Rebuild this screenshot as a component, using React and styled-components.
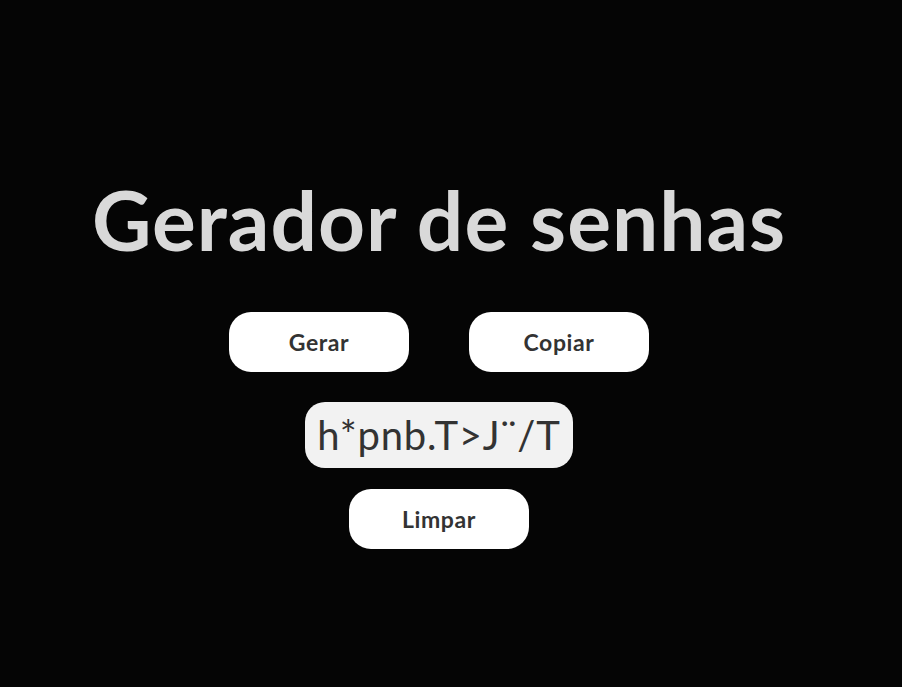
import * as React from "react";
import styled, { createGlobalStyle } from "styled-components";

const GlobalStyle = createGlobalStyle`
  html, body {
    margin: 0;
    background: #050505;
  }
  body {
    padding: 8px;
    font-family: "Lato", "Open Sans", sans-serif;
  }
`;

const Page = styled.main`
  width: 862px;
  display: flex;
  flex-direction: column;
  align-items: center;
`;

const Title = styled.h1`
  margin: 161px 0 0;
  font-size: 82px;
  font-weight: 700;
  letter-spacing: 1px;
  line-height: 100px;
  color: #d9d9d9;
`;

const Row = styled.div`
  display: flex;
  gap: 60px;
  margin-top: 43px;
`;

const Button = styled.button`
  width: 180px;
  height: 60px;
  border: none;
  border-radius: 22px;
  background: #ffffff;
  color: #333333;
  font-family: inherit;
  font-size: 23px;
  font-weight: 700;
  letter-spacing: 0.6px;
  cursor: pointer;
  margin-top: ${props => props.$top || 0}px;
`;

const Output = styled.div`
  margin-top: 30px;
  padding: 0 12px;
  height: 66px;
  display: flex;
  align-items: center;
  border-radius: 20px;
  background: #f2f2f2;
  color: #333333;
  font-size: 40px;
  letter-spacing: 0.8px;
`;

const App = () => {
  const [password] = React.useState("h*pnb.T>J¨/T");

  return (
    <>
      <GlobalStyle />
      <Page>
        <Title>Gerador de senhas</Title>
        <Row>
          <Button>Gerar</Button>
          <Button>Copiar</Button>
        </Row>
        <Output>{password}</Output>
        <Button $top={21}>Limpar</Button>
      </Page>
    </>
  );
};

export default App;
